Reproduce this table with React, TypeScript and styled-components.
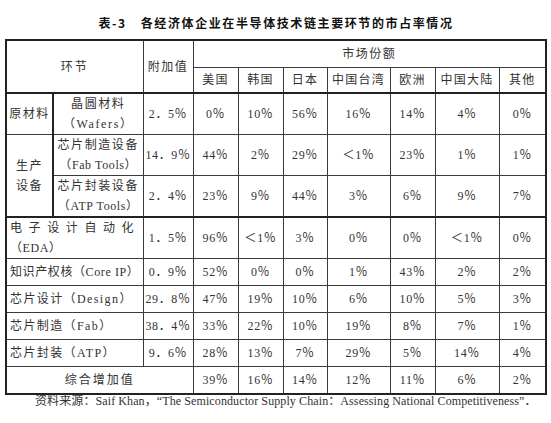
import React from 'react';
import styled, { createGlobalStyle } from 'styled-components';

const GlobalStyle = createGlobalStyle`
  body {
    margin: 0;
    background: #ffffff;
  }
`;

const Page = styled.div`
  width: 551px;
  height: 423px;
  overflow: hidden;
  font-family: "Liberation Serif", "Noto Sans CJK SC", serif;
  color: #333333;
  font-size: 12px;
`;

const Title = styled.div`
  padding-top: 15px;
  height: 24px;
  line-height: 16px;
  text-align: center;
  font-family: "Noto Sans CJK SC", sans-serif;
  font-weight: 700;
  color: #111111;
  letter-spacing: 1.6px;
  padding-left: 1px;
`;

const TitleNo = styled.span`
  margin-right: 14px;
`;

const Table = styled.table`
  margin-left: 5px;
  width: 540px;
  table-layout: fixed;
  border-collapse: collapse;
  border: 2px solid #222222;
`;

const Row = styled.tr<{ $h: number }>`
  height: ${(p) => p.$h}px;
`;

const Cell = styled.td<{
  $align?: 'left' | 'center';
  $thickRight?: boolean;
  $thickBottom?: boolean;
  $spacing?: number;
}>`
  border: 1px solid #3a3a3a;
  ${(p) => (p.$thickRight ? 'border-right: 2px solid #222222;' : '')}
  ${(p) => (p.$thickBottom ? 'border-bottom: 2px solid #222222;' : '')}
  padding: 0 ${(p) => (p.$align === 'left' ? '3px' : '0')};
  text-align: ${(p) => p.$align ?? 'center'};
  vertical-align: middle;
  line-height: 20px;
  letter-spacing: ${(p) => p.$spacing ?? 1}px;
  white-space: nowrap;
  overflow: hidden;
`;

const Num = styled.span`
  letter-spacing: 0.6px;
`;

const Note = styled.div`
  margin-top: -2px;
  padding-left: 35px;
  line-height: 16px;
  white-space: nowrap;
  letter-spacing: 0.1px;
`;

const countries = ['美国', '韩国', '日本', '中国台湾', '欧洲', '中国大陆', '其他'];

const wafers = ['0％', '10％', '56％', '16％', '14％', '4％', '0％'];
const fabTools = ['44％', '2％', '29％', '＜1％', '23％', '1％', '1％'];
const atpTools = ['23％', '9％', '44％', '3％', '6％', '9％', '7％'];
const eda = ['96％', '＜1％', '3％', '0％', '0％', '＜1％', '0％'];

const simpleRows = [
  { label: '知识产权核（Core IP）', spacing: 0.6, added: '0．9％', vals: ['52％', '0％', '0％', '1％', '43％', '2％', '2％'] },
  { label: '芯片设计（Design）', spacing: 1.4, added: '29．8％', vals: ['47％', '19％', '10％', '6％', '10％', '5％', '3％'] },
  { label: '芯片制造（Fab）', spacing: 1.4, added: '38．4％', vals: ['33％', '22％', '10％', '19％', '8％', '7％', '1％'] },
  { label: '芯片封装（ATP）', spacing: 1.4, added: '9．6％', vals: ['28％', '13％', '7％', '29％', '5％', '14％', '4％'] },
];

const total = ['39％', '16％', '14％', '12％', '11％', '6％', '2％'];

const Values = ({ vals, thickBottom }: { vals: string[]; thickBottom?: boolean }) => (
  <>
    {vals.map((v, i) => (
      <Cell key={i} $thickBottom={thickBottom}>
        <Num>{v}</Num>
      </Cell>
    ))}
  </>
);

export default function App() {
  return (
    <Page>
      <GlobalStyle />
      <Title>
        <TitleNo>表-3</TitleNo>各经济体企业在半导体技术链主要环节的市占率情况
      </Title>
      <Table>
        <colgroup>
          <col style={{ width: 47 }} />
          <col style={{ width: 90 }} />
          <col style={{ width: 50 }} />
          <col style={{ width: 45 }} />
          <col style={{ width: 45 }} />
          <col style={{ width: 44 }} />
          <col style={{ width: 63 }} />
          <col style={{ width: 45 }} />
          <col style={{ width: 64 }} />
          <col style={{ width: 47 }} />
        </colgroup>
        <tbody>
          <Row $h={27}>
            <Cell rowSpan={2} colSpan={2} $thickBottom $spacing={2}>
              环节
            </Cell>
            <Cell rowSpan={2} $thickBottom $spacing={1.5}>
              附加值
            </Cell>
            <Cell colSpan={7} $spacing={1.5}>
              市场份额
            </Cell>
          </Row>
          <Row $h={26}>
            {countries.map((c) => (
              <Cell key={c} $thickBottom $spacing={1.2}>
                {c}
              </Cell>
            ))}
          </Row>
          <Row $h={40}>
            <Cell $thickRight $spacing={1.5}>
              原材料
            </Cell>
            <Cell $spacing={1.6}>
              晶圆材料
              <br />
              （Wafers）
            </Cell>
            <Cell>
              <Num>2．5％</Num>
            </Cell>
            <Values vals={wafers} />
          </Row>
          <Row $h={40}>
            <Cell rowSpan={2} $thickRight $thickBottom $spacing={1.5}>
              生产
              <br />
              设备
            </Cell>
            <Cell $spacing={1.6}>
              芯片制造设备
              <br />
              <Num>（Fab Tools）</Num>
            </Cell>
            <Cell>
              <Num>14．9％</Num>
            </Cell>
            <Values vals={fabTools} />
          </Row>
          <Row $h={40}>
            <Cell $thickBottom $spacing={1.6}>
              芯片封装设备
              <br />
              <Num>（ATP Tools）</Num>
            </Cell>
            <Cell $thickBottom>
              <Num>2．4％</Num>
            </Cell>
            <Values vals={atpTools} thickBottom />
          </Row>
          <Row $h={40}>
            <Cell colSpan={2} $align="left" $spacing={6.6}>
              电子设计自动化
              <br />
              <Num>（EDA）</Num>
            </Cell>
            <Cell>
              <Num>1．5％</Num>
            </Cell>
            <Values vals={eda} />
          </Row>
          {simpleRows.map((r) => (
            <Row $h={27} key={r.label}>
              <Cell colSpan={2} $align="left" $spacing={r.spacing}>
                {r.label}
              </Cell>
              <Cell>
                <Num>{r.added}</Num>
              </Cell>
              <Values vals={r.vals} />
            </Row>
          ))}
          <Row $h={27}>
            <Cell colSpan={3} $spacing={2}>
              综合增加值
            </Cell>
            <Values vals={total} />
          </Row>
        </tbody>
      </Table>
      <Note>
        资料来源：Saif Khan，“The Semiconductor Supply Chain：Assessing National Competitiveness”．
      </Note>
    </Page>
  );
}
